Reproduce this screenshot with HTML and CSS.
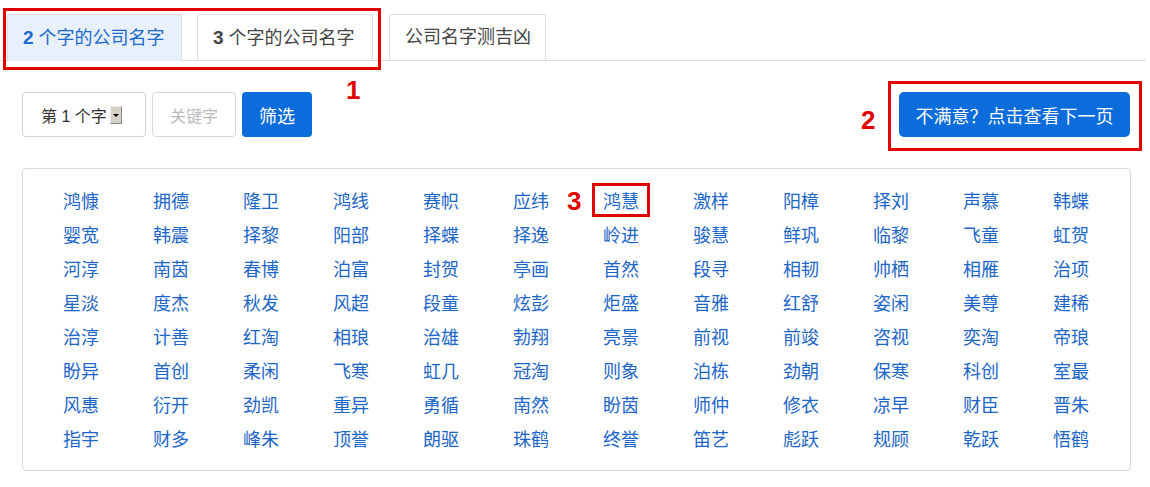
FILE: index.html
```html
<!DOCTYPE html>
<html lang="zh-CN">
<head>
<meta charset="utf-8">
<title>公司名字</title>
<link rel="stylesheet" href="styles.css">
</head>
<body>
<div class="page">
  <div class="tabs">
    <div class="tab active"><b>2</b> 个字的公司名字</div>
    <div class="tab"><b>3</b> 个字的公司名字</div>
    <div class="tab">公司名字测吉凶</div>
  </div>

  <div class="toolbar">
    <div class="filters">
      <div class="select">第 1 个字<span class="arrow"></span></div>
      <div class="input">关键字</div>
      <div class="btn">筛选</div>
    </div>
    <div class="btn next">不满意？点击查看下一页</div>
  </div>

  <div class="panel">
    <ul class="names">
      <li>鸿慷</li><li>拥德</li><li>隆卫</li><li>鸿线</li><li>赛帜</li><li>应纬</li><li>鸿慧</li><li>激样</li><li>阳樟</li><li>择刘</li><li>声慕</li><li>韩蝶</li>
      <li>婴宽</li><li>韩震</li><li>择黎</li><li>阳部</li><li>择蝶</li><li>择逸</li><li>岭进</li><li>骏慧</li><li>鲜巩</li><li>临黎</li><li>飞童</li><li>虹贺</li>
      <li>河淳</li><li>南茵</li><li>春博</li><li>泊富</li><li>封贺</li><li>亭画</li><li>首然</li><li>段寻</li><li>相韧</li><li>帅栖</li><li>相雁</li><li>治项</li>
      <li>星淡</li><li>度杰</li><li>秋发</li><li>风超</li><li>段童</li><li>炫彭</li><li>炬盛</li><li>音雅</li><li>红舒</li><li>姿闲</li><li>美尊</li><li>建稀</li>
      <li>治淳</li><li>计善</li><li>红淘</li><li>相琅</li><li>治雄</li><li>勃翔</li><li>亮景</li><li>前视</li><li>前竣</li><li>咨视</li><li>奕淘</li><li>帝琅</li>
      <li>盼异</li><li>首创</li><li>柔闲</li><li>飞寒</li><li>虹几</li><li>冠淘</li><li>则象</li><li>泊栋</li><li>劲朝</li><li>保寒</li><li>科创</li><li>室最</li>
      <li>风惠</li><li>衍开</li><li>劲凯</li><li>重异</li><li>勇循</li><li>南然</li><li>盼茵</li><li>师仲</li><li>修衣</li><li>凉早</li><li>财臣</li><li>晋朱</li>
      <li>指宇</li><li>财多</li><li>峰朱</li><li>顶誉</li><li>朗驱</li><li>珠鹤</li><li>终誉</li><li>笛艺</li><li>彪跃</li><li>规顾</li><li>乾跃</li><li>悟鹤</li>
    </ul>
  </div>

  <div class="mark box1"></div>
  <div class="mark-num num1">1</div>
  <div class="mark box2"></div>
  <div class="mark-num num2">2</div>
  <div class="mark box3"></div>
  <div class="mark-num num3">3</div>
</div>
</body>
</html>
```

FILE: styles.css
```css
* { box-sizing: border-box; }
html, body { margin: 0; padding: 0; background: #fff; }
body {
  font-family: "Liberation Sans", "Noto Sans CJK SC", sans-serif;
  color: #444;
  width: 1150px;
  height: 487px;
  overflow: hidden;
}
.page { position: relative; width: 1150px; height: 487px; }

.tabs {
  display: flex;
  gap: 15px;
  padding: 14px 0 0 7px;
  margin-right: 4px;
  border-bottom: 1px solid #dcdcdc;
  height: 61px;
}
.tab {
  height: 47px;
  padding: 0 15px;
  border: 1px solid #dedede;
  border-bottom: none;
  border-radius: 3px 3px 0 0;
  font-size: 18px;
  line-height: 45px;
  color: #444;
  white-space: nowrap;
}
.tab:nth-child(2) { width: 176px; }
.tab:nth-child(3) { width: 157px; margin-left: 1px; }
.tab.active {
  width: 175px;
  background: #e7f0fb;
  color: #1c68cf;
}
.tab b { font-weight: bold; font-size: 19px; }

.toolbar {
  display: flex;
  justify-content: space-between;
  align-items: flex-start;
  padding: 31px 20px 0 22px;
  height: 107px;
}
.filters { display: flex; gap: 6px; }
.select, .input, .btn {
  height: 45px;
  border-radius: 4px;
  font-size: 16px;
  display: flex;
  align-items: center;
}
.select {
  width: 124px;
  border: 1px solid #d2d2d2;
  padding-left: 18px;
  color: #333;
  gap: 3px;
}
.arrow {
  display: inline-block;
  width: 12px;
  height: 18px;
  background: #d4d0c8;
  border: 1px solid #888;
  border-top-color: #eee;
  border-left-color: #eee;
  position: relative;
}
.arrow::after {
  content: "";
  position: absolute;
  left: 2px;
  top: 7px;
  border-left: 3px solid transparent;
  border-right: 3px solid transparent;
  border-top: 3px solid #000;
}
.input {
  width: 84px;
  border: 1px solid #d8d8d8;
  color: #bbb;
  justify-content: center;
}
.btn {
  width: 70px;
  background: #0b6cdb;
  color: #fff;
  font-size: 18px;
  justify-content: center;
}
.btn.next {
  width: 231px;
  border-radius: 5px;
}

.panel {
  margin: 0 19px 0 22px;
  border: 1px solid #dadada;
  border-radius: 4px;
  height: 303px;
  padding: 14px 0 14px 40px;
}
.names {
  list-style: none;
  margin: 0;
  padding: 0;
  display: grid;
  grid-template-columns: repeat(12, 90px);
  grid-auto-rows: 34px;
  font-family: "Noto Sans CJK SC", sans-serif;
}
.names li {
  font-size: 18px;
  line-height: 34px;
  color: #1c66c9;
  white-space: nowrap;
}

.mark {
  position: absolute;
  border: 3px solid #e00000;
}
.box1 { left: 3px; top: 8px; width: 378px; height: 62px; }
.box2 { left: 888px; top: 81px; width: 254px; height: 70px; }
.box3 { left: 592px; top: 183px; width: 58px; height: 34px; }
.mark-num {
  position: absolute;
  color: #e00000;
  font-family: "Liberation Sans", sans-serif;
  font-weight: bold;
  font-size: 26px;
  line-height: 1;
}
.num1 { left: 346px; top: 77px; }
.num2 { left: 861px; top: 107px; }
.num3 { left: 567px; top: 188px; }
```
